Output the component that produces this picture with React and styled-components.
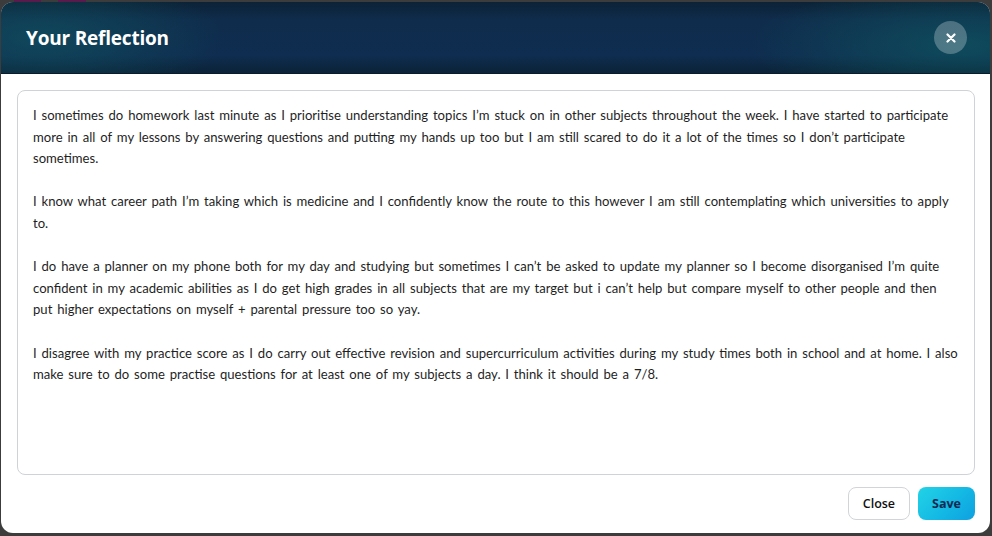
import React, { useState } from "react";
import styled, { createGlobalStyle } from "styled-components";

const GlobalStyle = createGlobalStyle`
  html, body {
    margin: 0;
    padding: 0;
    height: 100%;
  }
  body {
    font-family: "Lato", "Noto Sans", sans-serif;
    background: #3a3a3a;
  }
  #root {
    height: 100%;
  }
`;

const Backdrop = styled.div`
  height: 536px;
  box-sizing: border-box;
  padding: 2px 2px 3px 1px;
  background:
    linear-gradient(90deg,
      transparent 14px, #5b1a4c 14px, #5b1a4c 41px, transparent 41px,
      transparent 58px, #5b1a4c 58px, #5b1a4c 86px, transparent 86px) top / 100% 3px no-repeat,
    #3c3c3c;
  display: flex;
`;

const Modal = styled.div`
  flex: 1;
  display: flex;
  flex-direction: column;
  background: #ffffff;
  border-radius: 12px;
  overflow: hidden;
`;

const Header = styled.header`
  height: 71px;
  flex-shrink: 0;
  display: flex;
  align-items: center;
  justify-content: space-between;
  padding: 0 23px 0 25px;
  background:
    radial-gradient(ellipse 260px 90px at 40px 50%, rgba(16, 90, 100, 0.6), transparent 70%),
    radial-gradient(ellipse 300px 90px at 960px 60%, rgba(14, 95, 100, 0.6), transparent 70%),
    linear-gradient(180deg, #0c2236 0%, #0f2c4c 25%, #0f2d50 75%, #0b2338 100%);
  border-bottom: 1px solid #0a1c2c;
`;

const Title = styled.h2`
  margin: 0;
  color: #ffffff;
  font-family: "Open Sans", "Noto Sans", sans-serif;
  font-weight: 700;
  font-size: 19px;
  letter-spacing: -0.2px;
`;

const CloseIcon = styled.button`
  width: 33px;
  height: 33px;
  border-radius: 50%;
  border: none;
  background: rgba(255, 255, 255, 0.26);
  color: #ffffff;
  display: flex;
  align-items: center;
  justify-content: center;
  padding: 0;
  cursor: pointer;
`;

const Body = styled.div`
  flex: 1;
  display: flex;
  flex-direction: column;
  padding: 16px 15px 12px 16px;
  gap: 12px;
`;

const Entry = styled.textarea`
  height: 385px;
  box-sizing: border-box;
  resize: none;
  border: 1px solid #cfd2d6;
  border-radius: 8px;
  padding: 14px 15px;
  font-family: "Lato", "Noto Sans", sans-serif;
  font-size: 13.1px;
  word-spacing: 1.5px;
  line-height: 21.6px;
  color: #1f1f1f;
  outline: none;
`;

const Footer = styled.div`
  display: flex;
  justify-content: flex-end;
  gap: 8px;
`;

const Button = styled.button`
  height: 33px;
  padding: 0 14px;
  border-radius: 8px;
  font-family: "Open Sans", "Noto Sans", sans-serif;
  font-size: 12.5px;
  cursor: pointer;
  border: ${(p) => (p.$primary ? "none" : "1px solid #d2d4d8")};
  background: ${(p) =>
    p.$primary ? "linear-gradient(135deg, #22d3e6 0%, #13b6e4 60%, #0ea0e0 100%)" : "#ffffff"};
  color: ${(p) => (p.$primary ? "#0d2a52" : "#111111")};
  font-weight: ${(p) => (p.$primary ? 700 : 600)};
`;

const initialText = `I sometimes do homework last minute as I prioritise understanding topics I’m stuck on in other subjects throughout the week. I have started to participate more in all of my lessons by answering questions and putting my hands up too but I am still scared to do it a lot of the times so I don’t participate sometimes.

I know what career path I’m taking which is medicine and I confidently know the route to this however I am still contemplating which universities to apply to.

I do have a planner on my phone both for my day and studying but sometimes I can’t be asked to update my planner so I become disorganised I’m quite confident in my academic abilities as I do get high grades in all subjects that are my target but i can’t help but compare myself to other people and then put higher expectations on myself + parental pressure too so yay.

I disagree with my practice score as I do carry out effective revision and supercurriculum activities during my study times both in school and at home. I also make sure to do some practise questions for at least one of my subjects a day. I think it should be a 7/8.`;

export default function App() {
  const [text, setText] = useState(initialText);
  return (
    <>
      <GlobalStyle />
      <Backdrop>
        <Modal>
          <Header>
            <Title>Your Reflection</Title>
            <CloseIcon aria-label="Close">
              <svg width="10" height="10" viewBox="0 0 10 10">
                <path d="M1.5 1.5 L8.5 8.5 M8.5 1.5 L1.5 8.5" stroke="#fff" strokeWidth="2.2" strokeLinecap="round" />
              </svg>
            </CloseIcon>
          </Header>
          <Body>
            <Entry value={text} onChange={(e) => setText(e.target.value)} />
            <Footer>
              <Button>Close</Button>
              <Button $primary>Save</Button>
            </Footer>
          </Body>
        </Modal>
      </Backdrop>
    </>
  );
}
